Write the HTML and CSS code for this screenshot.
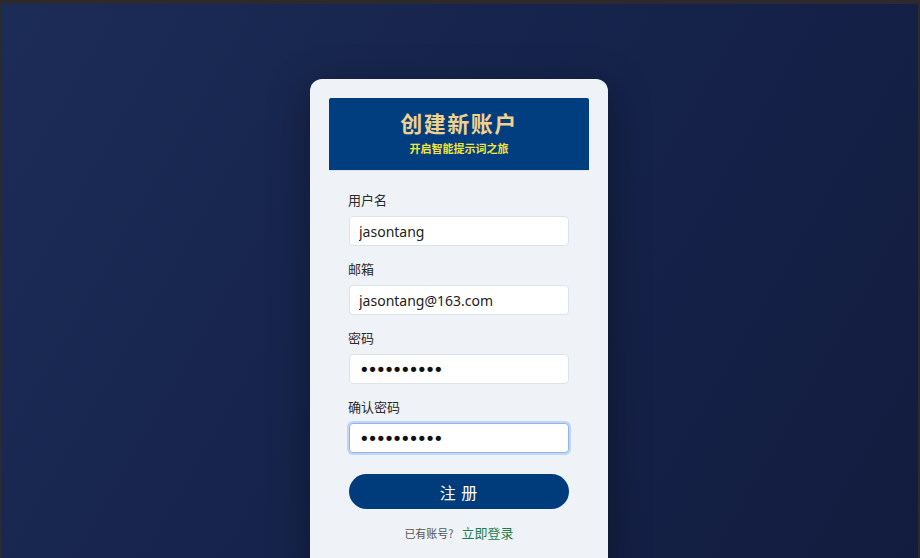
FILE: index.html
```html
<!DOCTYPE html>
<html lang="zh">
<head>
<meta charset="utf-8">
<title>创建新账户</title>
<link rel="stylesheet" href="styles.css">
</head>
<body>
<div class="frame">
  <div class="card">
    <div class="header">
      <h1 class="title">创建新账户</h1>
      <p class="subtitle">开启智能提示词之旅</p>
    </div>
    <form class="form">
      <div class="field">
        <label class="label">用户名</label>
        <input class="input" type="text" value="jasontang">
      </div>
      <div class="field">
        <label class="label">邮箱</label>
        <input class="input" type="text" value="jasontang@163.com">
      </div>
      <div class="field">
        <label class="label">密码</label>
        <input class="input pw" type="password" value="abcdefghij">
      </div>
      <div class="field">
        <label class="label">确认密码</label>
        <input class="input pw focused" type="password" value="abcdefghij">
      </div>
      <button type="button" class="btn">注 册</button>
      <p class="footer"><span class="muted">已有账号?</span><a class="link">立即登录</a></p>
    </form>
  </div>
</div>
</body>
</html>
```

FILE: styles.css
```css
html, body {
  margin: 0;
  padding: 0;
  height: 100%;
  overflow: hidden;
  background: #2c2a2e;
}
.frame {
  box-sizing: border-box;
  height: 100%;
  margin: 4px 2px 0 2px;
  background: linear-gradient(120deg, #1b2c56 0%, #15224a 55%, #121c3e 100%);
  padding-top: 75px;
  display: flex;
  justify-content: center;
  align-items: flex-start;
  font-family: "Noto Sans", "Noto Sans CJK SC", sans-serif;
}
.card {
  width: 298px;
  box-sizing: border-box;
  background: #eff3f7;
  border-radius: 12px;
  padding: 19px 19px 30px;
  box-shadow: 0 10px 40px rgba(0, 0, 0, 0.35);
  margin-left: -2px;
}
.header {
  background: #003e80;
  height: 73px;
  border-radius: 2px 2px 0 0;
  border-bottom: 1px solid #d8e2ec;
  box-sizing: border-box;
  display: flex;
  flex-direction: column;
  align-items: center;
  justify-content: flex-start;
  padding-top: 10px;
}
.title {
  margin: 0;
  font-family: "Noto Sans CJK SC", sans-serif;
  font-size: 22px;
  line-height: 28px;
  font-weight: 700;
  color: #f1d28c;
  letter-spacing: 1.5px;
}
.subtitle {
  margin: 5px 0 0;
  font-family: "Noto Sans CJK SC", sans-serif;
  font-size: 11px;
  line-height: 15px;
  font-weight: 700;
  color: #f6e43a;
}
.form {
  padding: 20px 20px 0;
  display: flex;
  flex-direction: column;
}
.field {
  display: flex;
  flex-direction: column;
  margin-bottom: 7px;
}
.label {
  font-family: "Noto Sans CJK SC", sans-serif;
  font-size: 13px;
  line-height: 18px;
  color: #2a2a2a;
  margin-bottom: 7px;
  margin-left: -1px;
}
.input {
  box-sizing: border-box;
  height: 30px;
  width: 100%;
  border: 1px solid #dde3ea;
  border-radius: 4px;
  background: #ffffff;
  padding: 0 9px;
  font-family: "Noto Sans", "Noto Sans CJK SC", sans-serif;
  font-size: 14px;
  color: #222;
  outline: none;
  margin-bottom: 7px;
}
.pw {
  font-family: "DejaVu Sans", sans-serif;
  font-size: 18px;
  letter-spacing: -2.4px;
  color: #111;
}
.focused {
  border: 1px solid #8db6e8;
  box-shadow: 0 0 0 2px rgba(140, 180, 232, 0.45);
}
.btn {
  margin-top: 7px;
  height: 35px;
  border: none;
  border-radius: 18px;
  background: #003b7c;
  color: #ffffff;
  font-family: "Noto Sans CJK SC", sans-serif;
  font-size: 16px;
  letter-spacing: 1px;
  cursor: pointer;
}
.footer {
  margin: 12px 0 0;
  text-align: center;
  font-family: "Noto Sans CJK SC", sans-serif;
  line-height: 20px;
}
.muted {
  font-size: 11px;
  color: #555;
  margin-right: 8px;
}
.link {
  font-size: 13px;
  color: #1d7b4e;
}
```
